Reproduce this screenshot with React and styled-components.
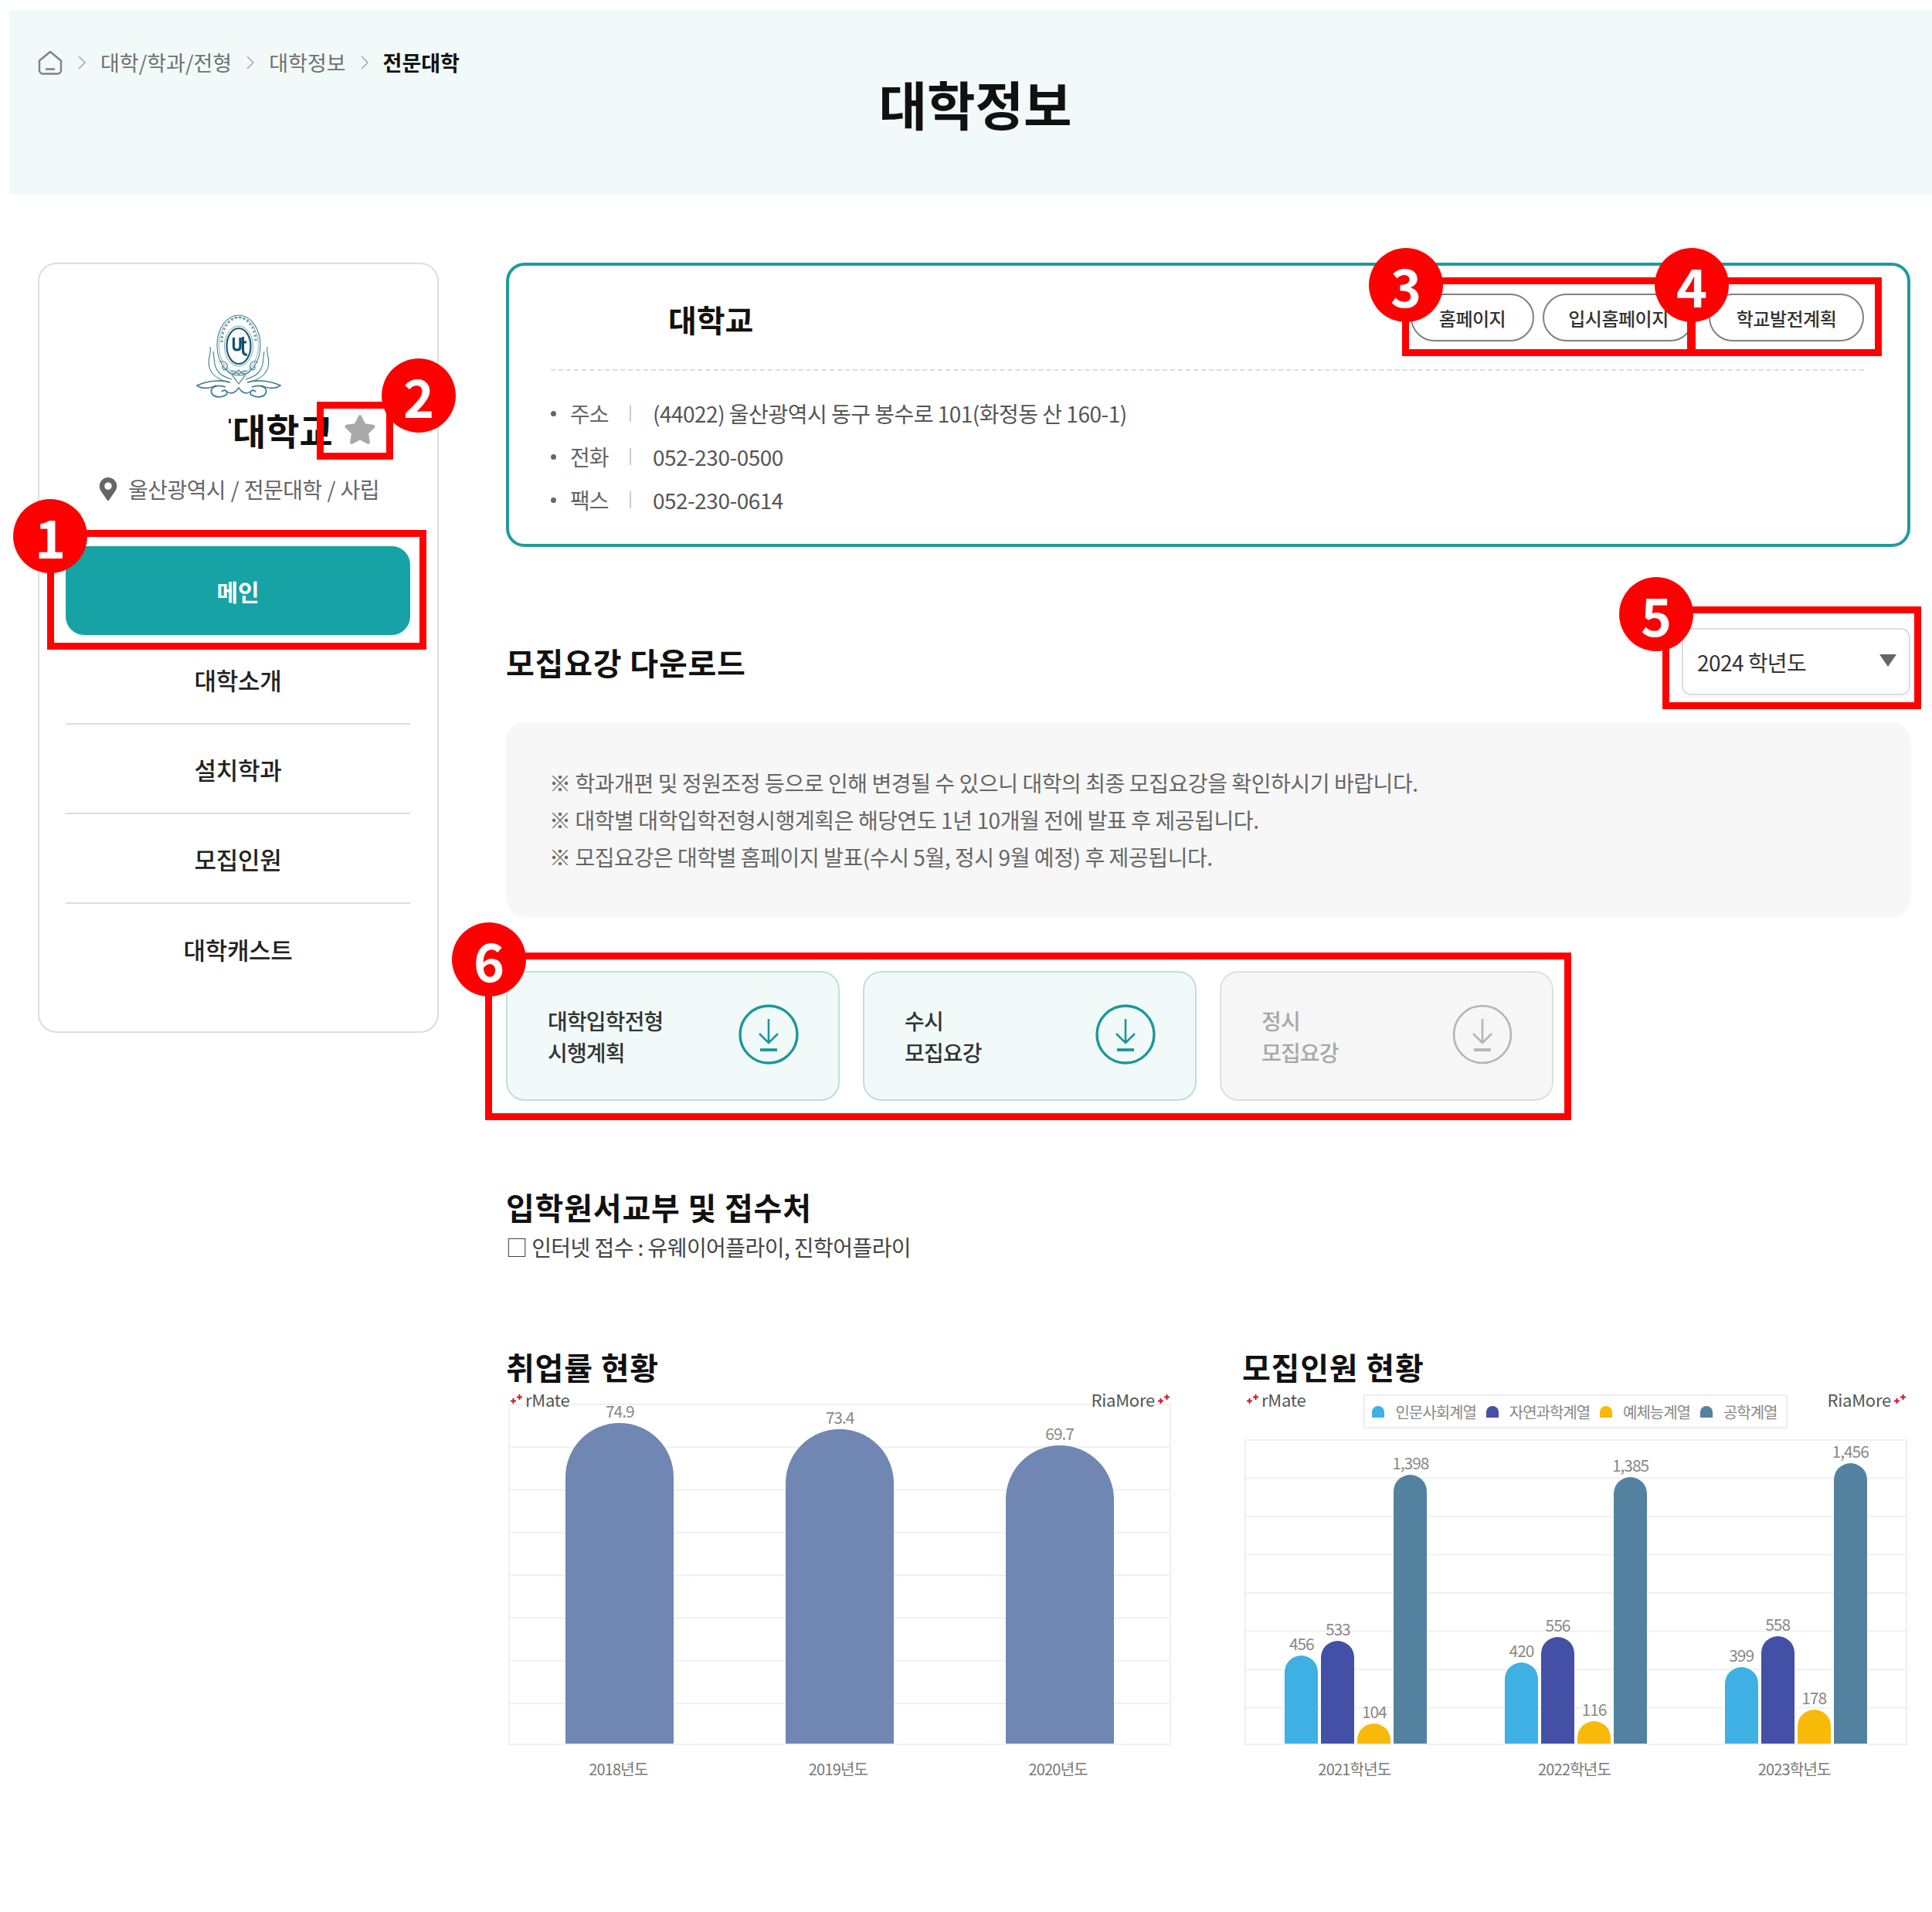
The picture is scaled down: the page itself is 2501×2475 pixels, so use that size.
import React from 'react'
import styled, { createGlobalStyle } from 'styled-components'
import { FaStar, FaMapMarkerAlt } from 'react-icons/fa'

const GlobalStyle = createGlobalStyle`
    * { box-sizing: border-box; }
    body {
        margin: 0;
        background: #fff;
        color: #222;
        font-family: 'Noto Sans CJK KR', 'Noto Sans', sans-serif;
    }
`

const infoRows = [
    { label: '주소', value: '(44022) 울산광역시 동구 봉수로 101(화정동 산 160-1)' },
    { label: '전화', value: '052-230-0500' },
    { label: '팩스', value: '052-230-0614' },
]

const notices = [
    '※ 학과개편 및 정원조정 등으로 인해 변경될 수 있으니 대학의 최종 모집요강을 확인하시기 바랍니다.',
    '※ 대학별 대학입학전형시행계획은 해당연도 1년 10개월 전에 발표 후 제공됩니다.',
    '※ 모집요강은 대학별 홈페이지 발표(수시 5월, 정시 9월 예정) 후 제공됩니다.',
]

const downloads = [
    { lines: ['대학입학전형', '시행계획'] },
    { lines: ['수시', '모집요강'] },
    { lines: ['정시', '모집요강'], off: true },
]

const COLORS = ['#3eb0e4', '#4350a6', '#f7b90a', '#5382a1']
const LEGEND = ['인문사회계열', '자연과학계열', '예체능계열', '공학계열']

const jobData = [
    { year: '2018년도', values: ['74.9'] },
    { year: '2019년도', values: ['73.4'] },
    { year: '2020년도', values: ['69.7'] },
]

const recruitData = [
    { year: '2021학년도', values: ['456', '533', '104', '1,398'] },
    { year: '2022학년도', values: ['420', '556', '116', '1,385'] },
    { year: '2023학년도', values: ['399', '558', '178', '1,456'] },
]

const num = (v) => parseFloat(v.replace(',', ''))

const HomeIcon = () => (
    <svg width="34" height="34" viewBox="0 0 34 34" fill="none" stroke="#808080" strokeWidth="2.4" strokeLinejoin="round">
        <path d="M3 14.5 L17 3 L31 14.5 V27 a4.5 4.5 0 0 1 -4.5 4.5 H7.5 A4.5 4.5 0 0 1 3 27 Z" />
        <path d="M11 25.5 H23" strokeWidth="2.6" />
    </svg>
)

const Chevron = () => (
    <svg width="12" height="22" viewBox="0 0 12 22" fill="none" stroke="#a6a6a6" strokeWidth="1.5">
        <path d="M2 3 L10 11 L2 19" />
    </svg>
)

const Emblem = () => (
    <svg width="110" height="110" viewBox="0 0 110 110" fill="none" stroke="#3f7f90" strokeWidth="1.1">
        {/* seal rings */}
        <ellipse cx="55" cy="40" rx="28" ry="39" />
        <ellipse cx="55" cy="40" rx="25.5" ry="36.5" strokeWidth="0.6" />
        <path d="M33 36 A22 32 0 0 1 77 36" strokeWidth="3.2" strokeDasharray="2.4 3" opacity="0.75" />
        <ellipse cx="55" cy="41" rx="18.5" ry="26" strokeWidth="0.7" />
        <ellipse cx="55" cy="41" rx="15.5" ry="23" stroke="#1d5f74" strokeWidth="2.2" />
        {/* centre mark */}
        <path d="M48.5 30 V42 Q48.5 46 53 46 Q57 46 57 42 V30" stroke="#11516a" strokeWidth="3.2" />
        <path d="M60.5 29 V46 Q60.5 53 66 52 M56 36 H65" stroke="#11516a" strokeWidth="3.2" />
        {/* side flames */}
        <path d="M18 42 C20 50 14 58 17 68 C19 78 28 84 42 88 M22 48 C24 58 22 68 30 76 C34 80 40 82 46 84" />
        <path d="M92 42 C90 50 96 58 93 68 C91 78 82 84 68 88 M88 48 C86 58 88 68 80 76 C76 80 70 82 64 84" />
        {/* lower ornament inside the ring */}
        <path d="M30 62 C36 58 42 64 40 70 C36 74 32 70 35 66 M80 62 C74 58 68 64 70 70 C74 74 78 70 75 66" strokeWidth="1.4" opacity="0.8" />
        <path d="M38 70 C44 80 50 78 55 72 C60 78 66 80 72 70 M46 78 L55 90 L64 78 M44 74 C48 72 52 74 55 78 C58 74 62 72 66 74" strokeWidth="1.3" opacity="0.85" />
        {/* bottom flourish */}
        <path d="M44 88 C32 84 14 86 1 92 C8 97 18 96 26 92 M66 88 C78 84 96 86 109 92 C102 97 92 96 84 92" strokeWidth="1.7" />
        <path d="M38 94 C28 90 17 94 20 102 C23 108 33 108 39 104 C42 100 37 96 33 100 M72 94 C82 90 93 94 90 102 C87 108 77 108 71 104 C68 100 73 96 77 100" strokeWidth="1.8" />
        <path d="M40 100 C46 104 51 101 55 95 C59 101 64 104 70 100" strokeWidth="1.5" />
    </svg>
)

const DownloadIcon = ({ color, thin }) => (
    <svg width="78" height="78" viewBox="0 0 78 78" fill="none" stroke={color}>
        <circle cx="39" cy="39" r="37" strokeWidth={thin ? 2.6 : 3.4} />
        <path d="M39 19 V49 M27 38 L39 50 L51 38" strokeWidth="2.6" />
        <path d="M28 59 H50" strokeWidth="3.8" />
    </svg>
)

const Sparks = () => (
    <svg width="17" height="14" viewBox="0 0 17 14" fill="none" stroke="#d0112b" strokeWidth="2">
        <path d="M1 9.5 H8 M4.5 6 V13 M9 4.5 H16 M12.5 1 V8" />
    </svg>
)

const Chart = ({ title, data, height, step, barWidth, gap, scale, tint, legend }) => (
    <ChartBlock>
        <ChartTitle>{title}</ChartTitle>
        <ChartBody>
            <BrandRow>
                <Brand><Sparks />rMate</Brand>
                {legend && (
                    <Legend>
                        {LEGEND.map((name, i) => (
                            <LegendItem key={name}>
                                <Swatch $color={COLORS[i]} />
                                {name}
                            </LegendItem>
                        ))}
                    </Legend>
                )}
                <Brand>RiaMore <Sparks /></Brand>
            </BrandRow>
            <Plot $height={height} $step={step}>
                {data.map((group) => (
                    <BarGroup key={group.year} $gap={gap}>
                        {group.values.map((v, i) => (
                            <BarCol key={i} $width={barWidth}>
                                <BarValue>{v}</BarValue>
                                <Bar $width={barWidth} $color={tint || COLORS[i]} style={{ height: num(v) * scale }} />
                            </BarCol>
                        ))}
                    </BarGroup>
                ))}
            </Plot>
        </ChartBody>
        <Axis>
            {data.map((group) => <AxisLabel key={group.year}>{group.year}</AxisLabel>)}
        </Axis>
    </ChartBlock>
)

const App = () => {
    return (
        <Page>
            <GlobalStyle />

            <Banner>
                <Crumbs>
                    <HomeIcon />
                    <Chevron />
                    <Crumb>대학/학과/전형</Crumb>
                    <Chevron />
                    <Crumb>대학정보</Crumb>
                    <Chevron />
                    <Crumb $current>전문대학</Crumb>
                </Crumbs>
                <PageTitle>대학정보</PageTitle>
            </Banner>

            <Layout>
                <Sidebar>
                    <LogoWrap><Emblem /></LogoWrap>
                    <NameRow>
                        <SchoolName>대학교</SchoolName>
                        <FaStar size={42} color="#a9a9a9" />
                    </NameRow>
                    <Meta>
                        <FaMapMarkerAlt size={30} color="#666" />
                        울산광역시 / 전문대학 / 사립
                    </Meta>
                    <MainTab>메인</MainTab>
                    <NavItem>대학소개</NavItem>
                    <NavItem>설치학과</NavItem>
                    <NavItem>모집인원</NavItem>
                    <NavItem $last>대학캐스트</NavItem>
                </Sidebar>

                <Content>
                    <InfoCard>
                        <InfoHead>
                            <InfoName>대학교</InfoName>
                            <PillRow>
                                <Pill $width={160}>홈페이지</Pill>
                                <Pill $width={196} $gap={11}>입시홈페이지</Pill>
                                <Pill $width={201} $gap={19}>학교발전계획</Pill>
                            </PillRow>
                        </InfoHead>
                        <InfoList>
                            {infoRows.map((row) => (
                                <InfoRow key={row.label}>
                                    <InfoLabel>{row.label}</InfoLabel>
                                    <InfoValue>{row.value}</InfoValue>
                                </InfoRow>
                            ))}
                        </InfoList>
                    </InfoCard>

                    <SectionRow>
                        <Heading>모집요강 다운로드</Heading>
                        <YearSelect>2024 학년도<Caret /></YearSelect>
                    </SectionRow>

                    <Notice>
                        {notices.map((line) => <NoticeLine key={line}>{line}</NoticeLine>)}
                    </Notice>

                    <DownloadRow>
                        {downloads.map((d) => (
                            <DownloadCard key={d.lines.join()} $off={d.off}>
                                <DownloadText>
                                    {d.lines.map((l) => <div key={l}>{l}</div>)}
                                </DownloadText>
                                <DownloadIcon color={d.off ? '#b5b5b5' : '#1a979b'} thin={d.off} />
                            </DownloadCard>
                        ))}
                    </DownloadRow>

                    <ApplyHeading>입학원서교부 및 접수처</ApplyHeading>
                    <ApplyLine>□ 인터넷 접수 : 유웨이어플라이, 진학어플라이</ApplyLine>

                    <Charts>
                        <Chart title="취업률 현황" data={jobData} height={442} step={55.3} barWidth={140} gap={0} scale={5.54} tint="#7086b3" />
                        <Chart title="모집인원 현황" data={recruitData} height={396} step={49.5} barWidth={43} gap={4} scale={0.249} legend />
                    </Charts>
                </Content>
            </Layout>

            {/* annotation marks drawn over the capture */}
            <RedBox $x={61} $y={686} $w={491} $h={155} />
            <RedBox $x={410} $y={520} $w={99} $h={75} />
            <RedBox $x={1815} $y={359} $w={378} $h={102} />
            <RedBox $x={2186} $y={359} $w={250} $h={102} />
            <RedBox $x={2152} $y={785} $w={335} $h={133} />
            <RedBox $x={628} $y={1233} $w={1406} $h={217} />
            <Badge $x={65} $y={694}>1</Badge>
            <Badge $x={542} $y={512}>2</Badge>
            <Badge $x={1820} $y={369}>3</Badge>
            <Badge $x={2190} $y={369}>4</Badge>
            <Badge $x={2144} $y={795}>5</Badge>
            <Badge $x={633} $y={1242}>6</Badge>
        </Page>
    )
}

const Page = styled.div`
    position: relative;
    width: 2501px;
    min-height: 2475px;
    padding-top: 13px;
    overflow: hidden;
`

const Banner = styled.header`
    display: grid;
    height: 239px;
    margin-left: 12px;
    background: #f2faf9;
`

const Crumbs = styled.nav`
    grid-area: 1 / 1;
    align-self: start;
    display: flex;
    align-items: center;
    gap: 18px;
    padding: 50px 0 0 36px;
`

const Crumb = styled.span`
    font-size: 27px;
    line-height: 36px;
    letter-spacing: 0;
    font-weight: ${(p) => (p.$current ? 700 : 400)};
    color: ${(p) => (p.$current ? '#111' : '#707070')};
`

const PageTitle = styled.h1`
    grid-area: 1 / 1;
    justify-self: center;
    margin: 81px 0 0 12px;
    font-size: 68px;
    line-height: 80px;
    font-weight: 700;
    color: #111;
`

const Layout = styled.div`
    display: flex;
    align-items: flex-start;
    gap: 87px;
    padding: 88px 28px 0 49px;
`

const Sidebar = styled.aside`
    flex: 0 0 519px;
    height: 997px;
    padding: 65px 35px 0 34px;
    border: 2px solid #ddd;
    border-radius: 24px;
`

const LogoWrap = styled.div`
    display: flex;
    justify-content: center;
    height: 116px;
    padding-left: 2px;
`

const NameRow = styled.div`
    display: flex;
    align-items: center;
    gap: 14px;
    height: 56px;
    margin-top: 5px;
    padding-left: 216px;
`

const SchoolName = styled.strong`
    position: relative;
    font-size: 47px;
    line-height: 56px;
    font-weight: 700;
    color: #111;
    white-space: nowrap;
    &::before {
        content: '';
        position: absolute;
        left: -5px;
        top: 14px;
        width: 3px;
        height: 6px;
        background: #333;
    }
`

const Meta = styled.div`
    display: flex;
    align-items: center;
    justify-content: center;
    gap: 11px;
    height: 40px;
    margin-top: 29px;
    font-size: 28px;
    letter-spacing: -0.02em;
    word-spacing: 1px;
    color: #666;
`

const MainTab = styled.div`
    display: flex;
    align-items: center;
    justify-content: center;
    height: 115px;
    margin-top: 54px;
    border-radius: 24px;
    background: #17a2a6;
    color: #fff;
    font-size: 30px;
    font-weight: 700;
`

const NavItem = styled.div`
    display: flex;
    align-items: center;
    justify-content: center;
    height: ${(p) => (p.$last ? 116 : 116)}px;
    border-bottom: ${(p) => (p.$last ? 'none' : '2px solid #ddd')};
    font-size: 31px;
    font-weight: 500;
    letter-spacing: -0.01em;
    color: #222;
`

const Content = styled.main`
    flex: 1;
    min-width: 0;
`

const InfoCard = styled.section`
    height: 368px;
    padding: 0 56px 0 54px;
    border: 4px solid #1f9a9e;
    border-radius: 24px;
`

const InfoHead = styled.div`
    display: flex;
    align-items: center;
    justify-content: space-between;
    height: 136px;
    padding: 0 0 0 152px;
    border-bottom: 2px dashed #dcdcdc;
`

const InfoName = styled.h2`
    margin: 3px 0 0;
    font-size: 40px;
    font-weight: 700;
    color: #111;
`

const PillRow = styled.div`
    display: flex;
`

const Pill = styled.a`
    display: flex;
    align-items: center;
    justify-content: center;
    width: ${(p) => p.$width}px;
    height: 62px;
    margin-left: ${(p) => p.$gap || 0}px;
    border: 2px solid #808080;
    border-radius: 31px;
    font-size: 24px;
    font-weight: 500;
    letter-spacing: -0.02em;
    color: #333;
`

const InfoList = styled.ul`
    margin: 0;
    padding: 27px 0 0;
    list-style: none;
`

const InfoRow = styled.li`
    display: flex;
    align-items: center;
    height: 56px;
    font-size: 28px;
    letter-spacing: -0.018em;
    &::before {
        content: '';
        width: 7px;
        height: 7px;
        margin-right: 18px;
        border-radius: 50%;
        background: #666;
    }
`

const InfoLabel = styled.span`
    position: relative;
    width: 107px;
    letter-spacing: -0.04em;
    color: #666;
    &::after {
        content: '';
        position: absolute;
        left: 77px;
        top: 9px;
        width: 2px;
        height: 22px;
        background: #ccc;
    }
`

const InfoValue = styled.span`
    color: #555;
`

const SectionRow = styled.div`
    display: flex;
    align-items: center;
    justify-content: space-between;
    margin-top: 105px;
`

const Heading = styled.h2`
    margin: 0;
    font-size: 40px;
    line-height: 48px;
    font-weight: 700;
    letter-spacing: 0.02em;
    color: #111;
`

const YearSelect = styled.div`
    display: flex;
    align-items: center;
    justify-content: space-between;
    width: 296px;
    height: 87px;
    padding: 0 16px 0 18px;
    border: 2px solid #ddd;
    border-radius: 12px;
    font-size: 28px;
    letter-spacing: -0.02em;
    color: #333;
`

const Caret = styled.span`
    width: 0;
    height: 0;
    margin-top: -4px;
    border-left: 11px solid transparent;
    border-right: 11px solid transparent;
    border-top: 16px solid #666;
`

const Notice = styled.div`
    height: 252px;
    margin-top: 35px;
    padding: 54px 56px;
    border-radius: 24px;
    background: #f7f7f7;
`

const NoticeLine = styled.p`
    margin: 0;
    font-size: 28px;
    line-height: 48px;
    letter-spacing: -0.015em;
    color: #666;
`

const DownloadRow = styled.div`
    display: flex;
    gap: 30px;
    margin-top: 70px;
`

const DownloadCard = styled.a`
    display: flex;
    align-items: center;
    justify-content: space-between;
    width: 432px;
    height: 168px;
    padding: 0 51px 0 52px;
    border: 2px solid ${(p) => (p.$off ? '#dfdfdf' : '#bcdfe0')};
    border-radius: 24px;
    background: ${(p) => (p.$off ? '#f6f6f6' : '#f1faf9')};
    color: ${(p) => (p.$off ? '#a8a8a8' : '#333')};
    svg {
        margin-top: -4px;
    }
`

const DownloadText = styled.div`
    margin-top: 2px;
    font-size: 28px;
    line-height: 41px;
    font-weight: 500;
    letter-spacing: -0.03em;
`

const ApplyHeading = styled(Heading)`
    margin-top: 113px;
`

const ApplyLine = styled.p`
    margin: 8px 0 0;
    font-size: 28px;
    line-height: 40px;
    letter-spacing: -0.02em;
    color: #444;
`

const Charts = styled.div`
    display: grid;
    grid-template-columns: 865px 865px;
    gap: 88px;
    margin-top: 111px;
`

const ChartBlock = styled.div`
    display: flex;
    flex-direction: column;
`

const ChartTitle = styled(Heading)``

const ChartBody = styled.div`
    position: relative;
    display: flex;
    flex-direction: column;
    justify-content: flex-end;
    height: 466px;
    padding-left: 3px;
    width: 861px;
`

const BrandRow = styled.div`
    position: absolute;
    top: 6px;
    left: 5px;
    right: 1px;
    display: flex;
    align-items: flex-start;
    justify-content: space-between;
    z-index: 1;
`

const Brand = styled.span`
    display: flex;
    align-items: center;
    gap: 3px;
    font-size: 22px;
    line-height: 24px;
    letter-spacing: -0.01em;
    color: #555;
`

const Legend = styled.div`
    display: flex;
    align-items: center;
    justify-content: space-between;
    width: 549px;
    height: 44px;
    margin: 6px 0 0 24px;
    padding: 0 12px 0 9px;
    border: 2px solid #eee;
    background: #fff;
`

const LegendItem = styled.span`
    display: flex;
    align-items: center;
    gap: 14px;
    font-size: 20px;
    letter-spacing: -0.05em;
    color: #888;
`

const Swatch = styled.i`
    width: 16px;
    height: 15px;
    border-radius: 8px 8px 0 0;
    background: ${(p) => p.$color};
`

const Plot = styled.div`
    display: flex;
    width: 858px;
    height: ${(p) => p.$height}px;
    border: solid #f0f0f0;
    border-width: 0 2px 2px;
    background: linear-gradient(#f0f0f0 2px, transparent 2px) 0 0 / 100% ${(p) => p.$step}px;
`

const BarGroup = styled.div`
    flex: 1;
    display: flex;
    align-items: flex-end;
    justify-content: center;
    gap: ${(p) => p.$gap}px;
`

const BarCol = styled.div`
    display: flex;
    flex-direction: column;
    align-items: center;
    width: ${(p) => p.$width}px;
`

const BarValue = styled.span`
    margin-bottom: 4px;
    font-size: 21px;
    line-height: 24px;
    letter-spacing: -0.05em;
    white-space: nowrap;
    color: #888;
`

const Bar = styled.div`
    width: ${(p) => p.$width}px;
    border-radius: ${(p) => p.$width / 2}px ${(p) => p.$width / 2}px 0 0;
    background: ${(p) => p.$color};
`

const Axis = styled.div`
    display: flex;
    width: 858px;
    margin: 19px 0 0 3px;
    padding-right: 4px;
`

const AxisLabel = styled.span`
    flex: 1;
    text-align: center;
    font-size: 20px;
    line-height: 24px;
    letter-spacing: -0.04em;
    color: #777;
`

const RedBox = styled.div`
    position: absolute;
    left: ${(p) => p.$x}px;
    top: ${(p) => p.$y}px;
    width: ${(p) => p.$w}px;
    height: ${(p) => p.$h}px;
    border: 9px solid #ff0000;
`

const Badge = styled.div`
    position: absolute;
    left: ${(p) => p.$x - 48}px;
    top: ${(p) => p.$y - 48}px;
    display: flex;
    align-items: center;
    justify-content: center;
    width: 96px;
    height: 96px;
    border-radius: 50%;
    background: #ff0000;
    color: #fff;
    font-size: 68px;
    font-weight: 700;
    line-height: 1;
`

export default App
